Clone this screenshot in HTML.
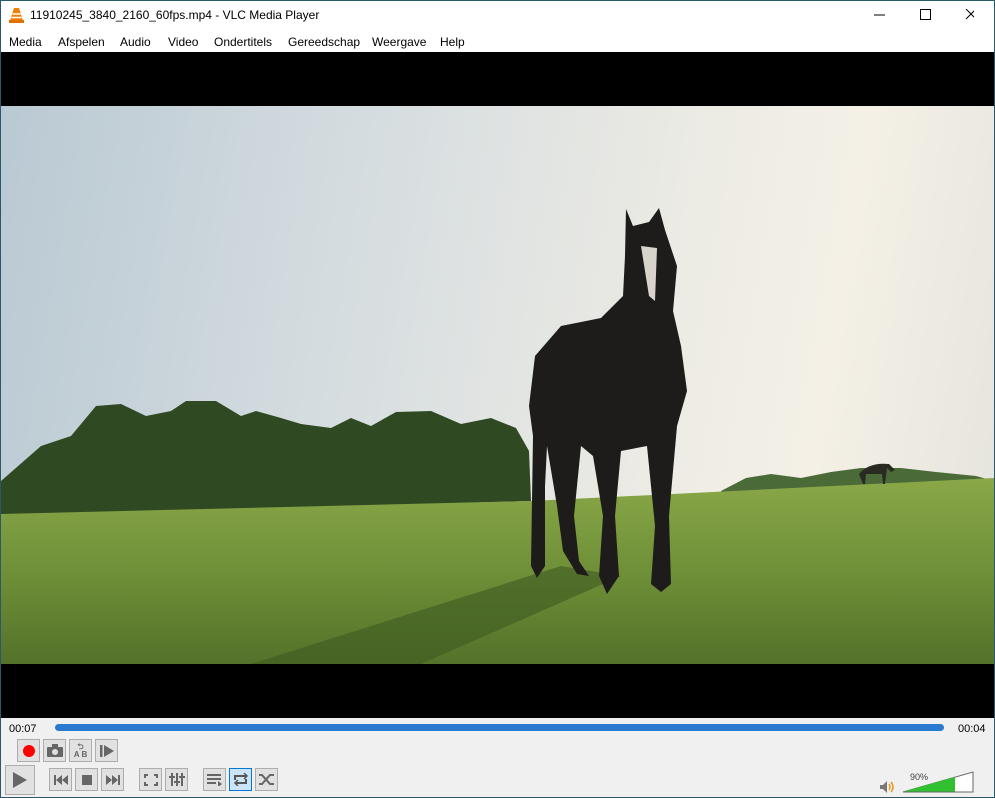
<!DOCTYPE html>
<html><head><style>
*{margin:0;padding:0;box-sizing:border-box}
body{width:995px;height:798px;overflow:hidden;background:#f0f0f0;font-family:"Liberation Sans",sans-serif;position:relative}
.t{position:absolute;font-size:12px;color:#000}
.b{position:absolute;width:23px;height:23px;border:1px solid #adadad;background:#e1e1e1;display:flex;align-items:center;justify-content:center}
</style></head><body>
<div style="position:absolute;left:0;top:0;width:995px;height:31px;background:#fff"></div>
<svg style="position:absolute;left:9px;top:7px" width="15" height="16" viewBox="0 0 15 16"><path d="M5 1h5l4 13H1z" fill="#f08000"/><path d="M3.5 7h8M2.5 10.5h10" stroke="#fff" stroke-width="1.5"/><rect x="0" y="13" width="15" height="3" fill="#e07000"/></svg>
<div class="t" style="left:30px;top:8px">11910245_3840_2160_60fps.mp4 - VLC Media Player</div>
<svg style="position:absolute;left:874px;top:9px" width="100" height="12"><path d="M0 6h11" stroke="#000"/><rect x="46.5" y="0.5" width="10" height="10" fill="none" stroke="#000"/><path d="M92 0l10 10M102 0l-10 10" stroke="#000"/></svg>
<div style="position:absolute;left:0;top:31px;width:995px;height:21px;background:#fff"></div>
<div class="t" style="left:9px;top:35px">Media</div>
<div class="t" style="left:58px;top:35px">Afspelen</div>
<div class="t" style="left:120px;top:35px">Audio</div>
<div class="t" style="left:168px;top:35px">Video</div>
<div class="t" style="left:214px;top:35px">Ondertitels</div>
<div class="t" style="left:288px;top:35px">Gereedschap</div>
<div class="t" style="left:372px;top:35px">Weergave</div>
<div class="t" style="left:440px;top:35px">Help</div>
<div style="position:absolute;left:1px;top:52px;width:993px;height:666px;background:#000"></div>
<div style="position:absolute;left:1px;top:106px;width:993px;height:558px;overflow:hidden;background:linear-gradient(100deg,#b9c9d3 0%,#d6dde0 35%,#ecebe4 65%,#f4f0e6 80%,#e4e3dc 100%)">
<svg width="993" height="558" viewBox="0 0 993 558" style="position:absolute;left:0;top:0">
<defs><linearGradient id="g" x1="0" y1="0" x2="0" y2="1"><stop offset="0" stop-color="#8aa848"/><stop offset="0.5" stop-color="#6f9038"/><stop offset="1" stop-color="#54722a"/></linearGradient></defs>
<path d="M0 375 L40 340 L70 330 L95 300 L120 298 L145 310 L170 305 L185 295 L215 295 L240 310 L255 305 L280 312 L300 318 L330 322 L350 312 L370 320 L395 306 L430 305 L460 318 L490 312 L515 322 L528 345 L530 395 L0 410Z" fill="#2f4a22"/>
<path d="M720 385 L745 372 L770 368 L800 372 L830 366 L860 362 L900 362 L935 366 L975 370 L993 375 L993 390 L720 392Z" fill="#4a6a38"/>
<path d="M0 408 L530 395 L993 372 L993 558 L0 558Z" fill="url(#g)"/>
<path d="M250 558 L560 460 L620 470 L420 558Z" fill="#3d5a22" opacity="0.6"/>
<path d="M858 368 q10 -12 30 -10 l6 6 l-4 2 l-4 -4 l-2 16 h-2 l-1 -10 h-16 l-1 10 h-2z" fill="#2a2a22"/>
<path d="M625 103 L632 120 L648 116 L658 102 L664 124 L676 160 L672 205 L680 240 L686 285 L676 320 L668 410 L670 478 L660 486 L650 478 L654 420 L646 340 L620 345 L614 410 L618 470 L606 488 L598 470 L602 410 L592 350 L580 340 L573 410 L578 455 L588 470 L576 468 L562 445 L556 400 L546 340 L544 380 L544 460 L536 472 L530 460 L532 330 L528 300 L534 250 L560 220 L600 212 L622 190 L624 150 Z" fill="#1e1c1a"/>
<path d="M640 140 L656 142 L654 195 L648 190Z" fill="#d8d4cc"/>
</svg></div>
<div class="t" style="left:9px;top:723px;font-size:11px">00:07</div>
<div style="position:absolute;left:55px;top:724px;width:889px;height:7px;border-radius:4px;background:#2a7bd0"></div>
<div class="t" style="left:958px;top:723px;font-size:11px">00:04</div>
<div class="b" style="left:17px;top:739px"><div style="width:12px;height:12px;border-radius:50%;background:#f00"></div></div>
<div class="b" style="left:43px;top:739px"><svg width="16" height="13"><rect x="0" y="3" width="16" height="10" rx="1" fill="#666"/><rect x="5" y="0" width="6" height="4" fill="#666"/><circle cx="8" cy="8" r="3" fill="#e1e1e1"/></svg></div>
<div class="b" style="left:69px;top:739px;font-size:8px;color:#666;flex-direction:column;font-weight:bold;line-height:8px"><span>⮌</span><span>A B</span></div>
<div class="b" style="left:95px;top:739px"><svg width="14" height="14"><rect x="0" y="1" width="2.5" height="12" fill="#666"/><path d="M4 1l10 6l-10 6z" fill="#666"/></svg></div>
<div class="b" style="left:5px;top:765px;width:30px;height:30px"><svg width="14" height="16"><path d="M0 0l14 8l-14 8z" fill="#666"/></svg></div>
<div class="b" style="left:49px;top:768px"><svg width="14" height="10"><rect x="0" width="2" height="10" fill="#666"/><path d="M8 0v10l-6-5zM14 0v10l-6-5z" fill="#666"/></svg></div>
<div class="b" style="left:75px;top:768px"><div style="width:10px;height:10px;background:#666"></div></div>
<div class="b" style="left:101px;top:768px"><svg width="14" height="10"><rect x="12" width="2" height="10" fill="#666"/><path d="M0 0v10l6-5zM6 0v10l6-5z" fill="#666"/></svg></div>
<div class="b" style="left:139px;top:768px"><svg width="14" height="12" fill="none" stroke="#666" stroke-width="2"><path d="M1 4V1h3M10 1h3v3M13 8v3h-3M4 11H1V8"/></svg></div>
<div class="b" style="left:165px;top:768px"><svg width="16" height="13" stroke="#666" stroke-width="2"><path d="M3 0v13M8 0v13M13 0v13"/><path d="M0 4h6M5 9h6M10 4h6"/></svg></div>
<div class="b" style="left:203px;top:768px"><svg width="16" height="12" stroke="#666" stroke-width="2"><path d="M0 1h14M0 5h14M0 9h9"/><path d="M11 7l4 3l-4 3z" fill="#666" stroke="none"/></svg></div>
<div class="b" style="left:229px;top:768px;background:#cce4f7;border-color:#0078d7"><svg width="16" height="13" fill="none" stroke="#555" stroke-width="2"><path d="M2 7V3h11M13 6v4H3"/><path d="M11 0l3 3l-3 3M5 7l-3 3l3 3" stroke-width="1.5"/></svg></div>
<div class="b" style="left:255px;top:768px"><svg width="16" height="13" fill="none" stroke="#666" stroke-width="2"><path d="M0 2h3l8 9h4M0 11h3l8-9h4"/></svg></div>
<svg style="position:absolute;left:880px;top:781px" width="16" height="12"><path d="M0 4h3l4-4v12l-4-4H0z" fill="#777"/><path d="M9 3q2 3 0 6M11 1q4 5 0 10" stroke="#e89a20" stroke-width="1.5" fill="none"/></svg>
<div class="t" style="left:910px;top:772px;font-size:9px;color:#444">90%</div>
<svg style="position:absolute;left:902px;top:771px" width="72" height="22"><path d="M1 21L71 1V21Z" fill="#fff" stroke="#666"/><path d="M1.5 20.5L53 6V20.5Z" fill="#30c030"/></svg>
<div style="position:absolute;left:0;top:0;width:995px;height:798px;border:1px solid #2a5a6a;pointer-events:none"></div>
</body></html>
